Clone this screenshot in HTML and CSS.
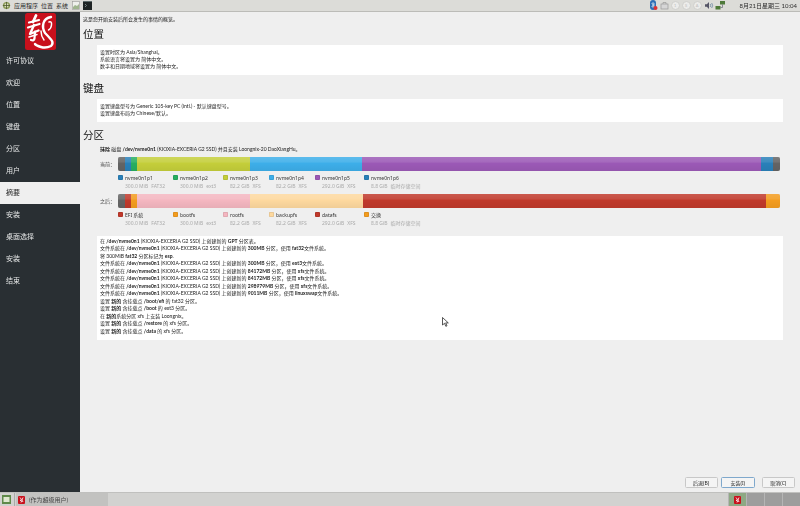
FILE: index.html
```html
<!DOCTYPE html>
<html lang="zh">
<head>
<meta charset="utf-8">
<title>摘要</title>
<link rel="stylesheet" href="styles.css">
</head>
<body>
<div class="screen">
  <header class="top-panel">
    <svg class="ico menu-ico" viewBox="0 0 10 10"><circle cx="5" cy="5" r="4" fill="#8a9a55"/><circle cx="5" cy="5" r="2.400" fill="#d8dcc0"/><path d="M5 1v8M1 5h8" stroke="#4e5a2c" stroke-width=".9"/></svg>
    <span class="menu">应用程序</span>
    <span class="menu">位置</span>
    <span class="menu">系统</span>
    <svg class="ico launcher" viewBox="0 0 8 9"><rect x=".5" y=".5" width="7" height="8" fill="#eef0ec" stroke="#999" stroke-width=".6"/><path d="M1 6l2-2 2 1 2-2v5H1z" fill="#9fb58f"/></svg>
    <svg class="ico term" viewBox="0 0 9 9"><rect width="9" height="9" fill="#1e2424"/><path d="M2 3l1.500 1.500L2 6" stroke="#9aa" stroke-width=".7" fill="none"/><rect x="0" y="0" width="9" height="1" fill="#5d6a6a"/></svg>
    <div class="tray">
      <svg class="ico bt" viewBox="0 0 9 11"><rect x="1" width="6" height="10" rx="3" fill="#2f6fb5"/><path d="M2.500 3l3 3-1.500 1.500v-5L5.500 4 2.500 7" stroke="#fff" stroke-width=".6" fill="none"/><circle cx="6.500" cy="8" r="2" fill="#d33"/></svg>
      <svg class="ico tr" viewBox="0 0 9 9"><rect x="1" y="3" width="7" height="5" fill="#d6d6d6" stroke="#999" stroke-width=".7"/><path d="M3 3V1.500h3V3" fill="none" stroke="#999" stroke-width=".7"/></svg>
      <span class="key">1</span><span class="key">S</span><span class="key">A</span>
      <svg class="ico tr vol" viewBox="0 0 10 9"><path d="M1 3.200h1.800L5 1v7L2.800 5.800H1z" fill="#556"/><path d="M6.200 3q1 1.500 0 3M7.700 2q1.800 2.500 0 5" fill="none" stroke="#5a7a9a" stroke-width=".7"/></svg>
      <svg class="ico net" viewBox="0 0 11 9"><rect x="5" y="0" width="5" height="3.500" fill="#4f7a3a"/><rect x="0.500" y="5" width="5" height="3.500" fill="#4f7a3a"/><path d="M7.500 3.500v3h-2" stroke="#667" stroke-width=".7" fill="none"/></svg>
      <span class="clock">8月21日星期三 10:04</span>
    </div>
  </header>

  <div class="middle">
    <aside class="sidebar">
      <div class="logo-wrap">
        <svg class="logo" viewBox="0 0 31 37">
          <rect width="31" height="37" rx="2.500" fill="#c8101c"/>
          <g fill="none" stroke="#fff" stroke-linecap="round" stroke-linejoin="round">
            <path d="M11 2.500L8 9" stroke-width="2.800"/>
            <path d="M4 9.500l10-2.500" stroke-width="2.200"/>
            <path d="M3 14.500l11.500-3.500" stroke-width="2.200"/>
            <path d="M9 12L5 21l8.500-3.500" stroke-width="2.400"/>
            <path d="M10 18.500l-.5 7q-.3 2.500-3.500 1.500" stroke-width="2.200"/>
            <path d="M4 24l8-2.500" stroke-width="1.500"/>
            <path d="M26 4q-6 1-7.500 6t1.500 10q3 3 6 6.500t0 6.500q-5 2.500-10 1t-6-3" stroke-width="2.400"/>
            <path d="M24 9q3-1 2.500 3t-3 5" stroke-width="1.500"/>
            <path d="M16 18q0 5 3 9" stroke-width="1.500"/>
          </g>
        </svg>
      </div>
      <nav class="steps">
        <div class="step">许可协议</div>
        <div class="step">欢迎</div>
        <div class="step">位置</div>
        <div class="step">键盘</div>
        <div class="step">分区</div>
        <div class="step">用户</div>
        <div class="step active">摘要</div>
        <div class="step">安装</div>
        <div class="step">桌面选择</div>
        <div class="step">安装</div>
        <div class="step">结束</div>
      </nav>
    </aside>

    <main class="main">
      <div class="content">
        <p class="intro">这是您开始安装后所会发生的事情的概览。</p>

        <h2 class="heading">位置</h2>
        <div class="box">
          <div>设置时区为 Asia/Shanghai。</div>
          <div>系统语言将设置为 简体中文。</div>
          <div>数字和日期地域将设置为 简体中文。</div>
        </div>

        <h2 class="heading">键盘</h2>
        <div class="box">
          <div>设置键盘型号为 Generic 105-key PC (intl.) - 默认键盘型号。</div>
          <div>设置键盘布局为 Chinese/默认。</div>
        </div>

        <h2 class="heading">分区</h2>
        <div class="disk-line"><b>抹除</b> 磁盘 <b>/dev/nvme0n1</b> (KIOXIA-EXCERIA G2 SSD) 并且安装 Loongnix-20 DaoXiangHu。</div>

        <div class="bar-row">
          <span class="bar-label">当前：</span>
          <div class="bar">
            <i class="seg c-gray" style="width:7px"></i>
            <i class="seg c-blue" style="width:6px"></i>
            <i class="seg c-green" style="width:6px"></i>
            <i class="seg c-lime" style="width:113px"></i>
            <i class="seg c-sky" style="width:112px"></i>
            <i class="seg c-purple" style="width:399px"></i>
            <i class="seg c-blue" style="width:12px"></i>
            <i class="seg c-gray" style="width:7px"></i>
          </div>
        </div>
        <div class="legend">
          <div class="item"><div class="name"><i class="swatch c-blue"></i>nvme0n1p1</div><div class="sub"><span>300.0 MiB</span><span>FAT32</span></div></div>
          <div class="item"><div class="name"><i class="swatch c-green"></i>nvme0n1p2</div><div class="sub"><span>300.0 MiB</span><span>ext3</span></div></div>
          <div class="item"><div class="name"><i class="swatch c-lime"></i>nvme0n1p3</div><div class="sub"><span>82.2 GiB</span><span>XFS</span></div></div>
          <div class="item"><div class="name"><i class="swatch c-sky"></i>nvme0n1p4</div><div class="sub"><span>82.2 GiB</span><span>XFS</span></div></div>
          <div class="item"><div class="name"><i class="swatch c-purple"></i>nvme0n1p5</div><div class="sub"><span>292.0 GiB</span><span>XFS</span></div></div>
          <div class="item"><div class="name"><i class="swatch c-blue"></i>nvme0n1p6</div><div class="sub"><span>8.8 GiB</span><span>临时存储空间</span></div></div>
        </div>

        <div class="bar-row">
          <span class="bar-label">之后：</span>
          <div class="bar">
            <i class="seg c-gray" style="width:7px"></i>
            <i class="seg c-red" style="width:6px"></i>
            <i class="seg c-orange" style="width:6px"></i>
            <i class="seg c-pink" style="width:113px"></i>
            <i class="seg c-tan" style="width:113px"></i>
            <i class="seg c-red" style="width:403px"></i>
            <i class="seg c-orange" style="width:14px"></i>
          </div>
        </div>
        <div class="legend">
          <div class="item"><div class="name"><i class="swatch c-red"></i>EFI 系统</div><div class="sub"><span>300.0 MiB</span><span>FAT32</span></div></div>
          <div class="item"><div class="name"><i class="swatch c-orange"></i>bootfs</div><div class="sub"><span>300.0 MiB</span><span>ext3</span></div></div>
          <div class="item"><div class="name"><i class="swatch c-pink"></i>rootfs</div><div class="sub"><span>82.2 GiB</span><span>XFS</span></div></div>
          <div class="item"><div class="name"><i class="swatch c-tan"></i>backupfs</div><div class="sub"><span>82.2 GiB</span><span>XFS</span></div></div>
          <div class="item"><div class="name"><i class="swatch c-red"></i>datafs</div><div class="sub"><span>292.0 GiB</span><span>XFS</span></div></div>
          <div class="item"><div class="name"><i class="swatch c-orange"></i>交换</div><div class="sub"><span>8.8 GiB</span><span>临时存储空间</span></div></div>
        </div>

        <div class="box jobs">
          <div>在 <b>/dev/nvme0n1</b> (KIOXIA-EXCERIA G2 SSD) 上创建新的 <b>GPT</b> 分区表。</div>
          <div>文件系统在 <b>/dev/nvme0n1</b> (KIOXIA-EXCERIA G2 SSD) 上创建新的 <b>300MB</b> 分区，使用 <b>fat32</b>文件系统。</div>
          <div>将 300MiB <b>fat32</b> 分区标记为 <b>esp</b>.</div>
          <div>文件系统在 <b>/dev/nvme0n1</b> (KIOXIA-EXCERIA G2 SSD) 上创建新的 <b>300MB</b> 分区，使用 <b>ext3</b>文件系统。</div>
          <div>文件系统在 <b>/dev/nvme0n1</b> (KIOXIA-EXCERIA G2 SSD) 上创建新的 <b>84172MB</b> 分区，使用 <b>xfs</b>文件系统。</div>
          <div>文件系统在 <b>/dev/nvme0n1</b> (KIOXIA-EXCERIA G2 SSD) 上创建新的 <b>84172MB</b> 分区，使用 <b>xfs</b>文件系统。</div>
          <div>文件系统在 <b>/dev/nvme0n1</b> (KIOXIA-EXCERIA G2 SSD) 上创建新的 <b>298979MB</b> 分区，使用 <b>xfs</b>文件系统。</div>
          <div>文件系统在 <b>/dev/nvme0n1</b> (KIOXIA-EXCERIA G2 SSD) 上创建新的 <b>9011MB</b> 分区，使用 <b>linuxswap</b>文件系统。</div>
          <div>设置 <b>新的</b> 含挂载点 <b>/boot/efi</b> 的 fat32 分区。</div>
          <div>设置 <b>新的</b> 含挂载点 <b>/boot</b> 的 ext3 分区。</div>
          <div>在 <b>新的</b>系统分区 xfs 上安装 Loongnix。</div>
          <div>设置 <b>新的</b> 含挂载点 <b>/restore</b> 的 xfs 分区。</div>
          <div>设置 <b>新的</b> 含挂载点 <b>/data</b> 的 xfs 分区。</div>
        </div>
      </div>

      <footer class="actions">
        <button class="btn">后退(B)</button>
        <button class="btn primary">安装(I)</button>
        <button class="btn cancel">取消(C)</button>
      </footer>
    </main>
  </div>

  <footer class="bottom-panel">
    <svg class="ico desk" viewBox="0 0 9 9"><rect width="9" height="9" fill="#5f8a4a"/><rect x="1.500" y="2" width="6" height="5" fill="#dfe8d0"/></svg>
    <i class="sep"></i>
    <div class="task">
      <svg class="ico mini" viewBox="0 0 7 8"><rect width="7" height="8" rx="1" fill="#c8101c"/><path d="M2 1.500l1.500 2-1.500 1 2 .5-1 1.500M5 1.500L4 4l1 2" fill="none" stroke="#fff" stroke-width=".8"/></svg>
      <span>(作为超级用户)</span>
    </div>
    <div class="switcher">
      <div class="ws current"><svg class="ico mini" viewBox="0 0 7 8"><rect width="7" height="8" rx="1" fill="#c8101c"/><path d="M2 1.500l1.500 2-1.500 1 2 .5-1 1.500M5 1.500L4 4l1 2" fill="none" stroke="#fff" stroke-width=".8"/></svg></div>
      <div class="ws"></div><div class="ws"></div><div class="ws"></div>
    </div>
  </footer>

  <svg class="cursor" viewBox="0 0 7 10"><path d="M.5.500v7.500l2-1.700 1.300 3 1.200-.5-1.300-2.900h2.600z" fill="#fff" stroke="#111" stroke-width=".7"/></svg>
</div>
</body>
</html>
```
FILE: styles.css
```css
html, body {
  margin: 0;
  height: 100%;
  overflow: hidden;
  background: #efefef;
}
* { box-sizing: border-box; }
.screen {
  position: relative;
  width: 800px;
  height: 506px;
  display: flex;
  flex-direction: column;
  font-family: "Lato", "Noto Sans CJK SC", sans-serif;
  color: #1c1c1c;
  font-size: 5px;
  filter: blur(0.25px);
}
.ico { display: block; flex: none; }

/* top panel */
.top-panel {
  height: 12px;
  flex: none;
  display: flex;
  align-items: center;
  padding-left: 2px;
  background: #dcdcd8;
  border-bottom: 1px solid #bcbcb8;
  font-size: 6px;
}
.menu-ico { width: 9px; height: 9px; margin-right: 3px; }
.menu { margin-right: 3px; color: #2c2c2c; white-space: nowrap; }
.launcher { width: 8px; height: 9px; margin: 0 3px 0 1px; }
.term { width: 9px; height: 9px; }
.tray {
  margin-left: auto;
  display: flex;
  align-items: center;
  height: 100%;
}
.bt { width: 9px; height: 11px; margin-right: 2px; }
.tr { width: 9px; height: 9px; margin-right: 2px; }
.key {
  width: 9px;
  height: 9px;
  margin-right: 2px;
  border-radius: 50%;
  background: #ececea;
  border: 1px solid #d0d0cc;
  color: #bbb;
  font-size: 4px;
  line-height: 7px;
  text-align: center;
}
.vol { width: 10px; margin-right: 1px; }
.net { width: 11px; height: 9px; }
.clock { margin: 0 3px 0 14px; color: #2c2c2c; font-size: 6px; white-space: nowrap; }

/* middle */
.middle { flex: 1; display: flex; min-height: 0; }
.sidebar {
  width: 80px;
  flex: none;
  background: #292f33;
  color: #e4e6e6;
  font-size: 7px;
}
.logo-wrap { height: 38px; display: flex; justify-content: center; padding-top: 1px; }
.logo { width: 31px; height: 37px; display: block; }
.step {
  height: 22px;
  line-height: 20.500px;
  padding-left: 6px;
}
.step.active { background: #efefef; color: #2c2c2c; }

/* main */
.main { flex: 1; display: flex; flex-direction: column; min-width: 0; }
.content { flex: 1; padding: 4px 17px 0 3px; min-height: 0; }
.intro { margin: 0; line-height: 7.500px; }
.heading {
  margin: 0;
  height: 21px;
  line-height: 21px;
  font-size: 10.500px;
  font-weight: 400;
  color: #111;
}
.box {
  margin-left: 14px;
  padding: 4px 3px;
  background: #fff;
  line-height: 7.400px;
  margin-bottom: 3px;
}
.box b, .disk-line b { font-weight: 700; }
.disk-line { margin-left: 17px; line-height: 7.500px; }
.bar-row { display: flex; align-items: center; height: 14.500px; margin-top: 3.500px; }
.bar-label { width: 32px; text-align: right; color: #444; white-space: nowrap; flex: none; }
.bar {
  margin-left: 2.500px;
  width: 662px;
  height: 14.500px;
  display: flex;
  border-radius: 2px;
  overflow: hidden;
  box-shadow: inset 0 0 0 .5px rgba(0,0,0,.2);
}
.seg { display: block; height: 100%; flex: none; background-image: linear-gradient(rgba(255,255,255,.16), rgba(255,255,255,.1) 35%, rgba(0,0,0,0) 45%, rgba(0,0,0,.05)); }
.c-gray { background-color: #646464; }
.c-blue { background-color: #2980b9; }
.c-green { background-color: #27ae60; }
.c-lime { background-color: #c4ce3a; }
.c-sky { background-color: #3daee9; }
.c-purple { background-color: #9b59b6; }
.c-red { background-color: #c0392b; }
.c-orange { background-color: #f39c1f; }
.c-pink { background-color: #f4b6c0; }
.c-tan { background-color: #fdd89e; }
.legend {
  display: grid;
  grid-template-columns: 55px 50px 46px 46px 49px auto;
  margin: 3.500px 0 0 35px;
  height: 15.500px;
  font-family: "Noto Sans", "Noto Sans CJK SC", sans-serif;
}
.name { display: flex; align-items: center; height: 6px; white-space: nowrap; color: #333; }
.swatch {
  display: block;
  width: 5px;
  height: 5px;
  border-radius: 1px;
  margin-right: 2px;
  box-shadow: inset 0 0 0 .5px rgba(0,0,0,.15);
}
.sub { display: flex; align-items: center; gap: 3px; height: 6px; margin: 2px 0 0 7px; color: #aaa; white-space: nowrap; }
.jobs { margin-top: 8.500px; padding: 2px 3px 5px; height: 104px; line-height: 7.500px; }
.actions {
  flex: none;
  display: flex;
  justify-content: flex-end;
  padding: 0 5px 4px 0;
  gap: 3px;
}
.btn {
  width: 33.500px;
  height: 11px;
  padding: 0;
  border: 1px solid #c8c8c8;
  border-radius: 1.500px;
  background: #f4f4f4;
  color: #222;
  font: 5px "Noto Sans", "Noto Sans CJK SC", sans-serif;
}
.btn.primary { border-color: #7fa8cc; }
.btn.cancel { margin-left: 4px; }

/* bottom panel */
.bottom-panel {
  height: 14px;
  flex: none;
  display: flex;
  align-items: stretch;
  background: #d2d2d0;
  border-top: 1px solid #c0c0be;
  font-size: 6px;
  color: #444;
}
.desk { width: 9px; height: 9px; margin: 2px 3px 0 2px; }
.sep { display: block; width: 1px; margin-right: 1px; background: #aaa; }
.task {
  width: 92px;
  display: flex;
  align-items: center;
  gap: 4px;
  padding-left: 2px;
  background: #c2c2c0;
}
.mini { width: 7px; height: 8px; }
.switcher { margin-left: auto; display: flex; }
.ws { width: 18px; background: #9d9d9d; border-left: 1px solid #b5b5b5; display: flex; align-items: center; justify-content: center; }
.ws.current { background: #8ea884; }

.cursor { position: absolute; left: 442px; top: 317px; width: 7px; height: 10px; }
```
